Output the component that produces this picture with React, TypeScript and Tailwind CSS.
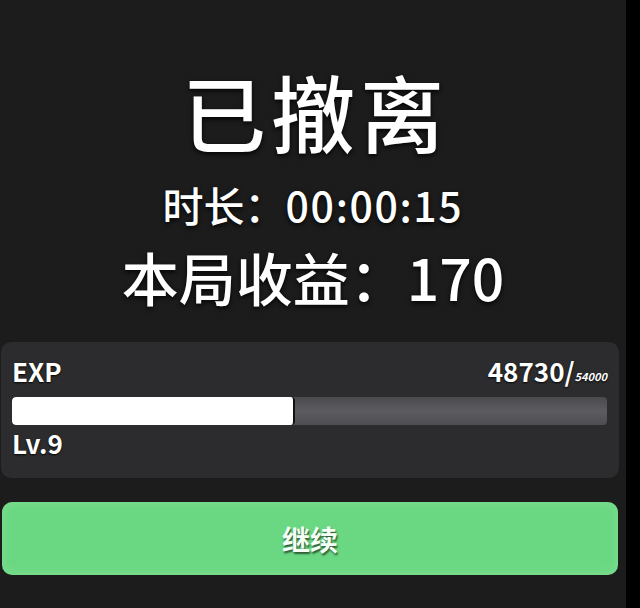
const cjk = "font-['Noto_Sans_CJK_SC','Noto_Sans',sans-serif]";

function ExpPanel({ exp, max, level, fill }: { exp: number; max: number; level: number; fill: number }) {
  return (
    <div className="ml-px mt-[37px] w-[618px] h-[136px] rounded-[10px] bg-[#2c2c2e] pl-[11px] pr-[12px] pt-[16px]">
      <div className="flex items-end justify-between h-[26px]">
        <span className="text-[26px] leading-none font-bold text-white [text-shadow:0_1px_2px_rgba(0,0,0,0.9)]">EXP</span>
        <span className="flex items-end leading-none text-white [text-shadow:0_1px_2px_rgba(0,0,0,0.9)]">
          <span className="text-[26px] font-bold">{exp}/</span>
          <span className="text-[11px] font-bold italic mb-[2px]">{max}</span>
        </span>
      </div>
      {/* progress bar */}
      <div className="mt-[13px] h-[28px] w-full rounded-[4px] bg-gradient-to-b from-[#4a4a4e] via-[#5c5c60] to-[#4e4e52] overflow-hidden">
        <div className="h-full rounded-[4px] bg-white border-r-2 border-[#111]" style={{ width: fill }} />
      </div>
      <div className="mt-[5px] text-[26px] leading-none font-bold text-white [text-shadow:0_1px_2px_rgba(0,0,0,0.9)]">
        Lv.{level}
      </div>
    </div>
  );
}

export default function App() {
  return (
    <div className={`flex w-[640px] h-[608px] bg-black ${cjk}`}>
      <div className="w-[626px] h-full bg-[#1c1c1c] flex flex-col">
        <div className="flex flex-col items-center text-white [text-shadow:0_2px_5px_rgba(0,0,0,0.9)]">
          <h1 className="pt-[69px] pl-[5px] text-[84px] leading-none font-medium tracking-[0.06em]">已撤离</h1>
          <div className="mt-[31px] text-[41px] leading-none font-medium">
            时长：<span className="tracking-[0.04em]">00:00:15</span>
          </div>
          <div className="mt-[23px] text-[57px] leading-none font-medium">本局收益：170</div>
        </div>

        <ExpPanel exp={48730} max={54000} level={9} fill={283} />

        <button className="ml-[2px] mt-[24px] w-[616px] h-[73px] rounded-[10px] bg-[#6ad882] shadow-[inset_0_0_12px_rgba(255,255,255,0.15)] flex items-center justify-center">
          <span className="text-[28px] leading-none font-bold text-[#f4fff6] [text-shadow:1px_2px_2px_rgba(0,0,0,0.6)]">继续</span>
        </button>
      </div>
    </div>
  );
}
